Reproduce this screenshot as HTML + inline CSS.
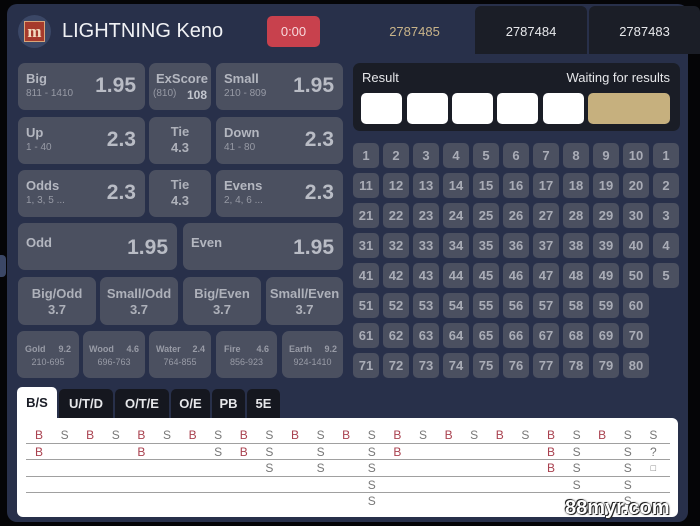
<!DOCTYPE html>
<html><head><meta charset="utf-8"><style>
*{margin:0;padding:0;box-sizing:border-box}
body{width:700px;height:526px;background:#050507;position:relative;overflow:hidden;font-family:"Liberation Sans","DejaVu Sans",sans-serif}
.a{position:absolute}
.panel{left:7px;top:4px;width:681px;height:518px;background:#28304a;border-radius:10px}
.cell{position:absolute;background:#4b5060;border-radius:7px;color:#aeb1ba;font-weight:bold}
.lbl{position:absolute;left:8px;top:8px;font-size:13px;color:#b4b7c0}
.sub{position:absolute;left:8px;top:25px;font-size:10px;font-weight:normal;color:#979aa5}
.big{position:absolute;right:9px;top:11px;font-size:21px;color:#b9bcc5}
.ctr{text-align:center;font-size:13px;line-height:16px;padding-top:7px}
.num{position:absolute;width:26px;height:25px;background:#4b5060;border-radius:5px;color:#a9acb6;font-size:13px;font-weight:bold;text-align:center;line-height:25px}
.tab{position:absolute;top:389px;height:29px;background:#15171f;color:#e6e7ea;font-size:13px;font-weight:bold;text-align:center;line-height:29px;border-radius:5px 5px 0 0}
.h{position:absolute;font-size:12px;width:14px;text-align:center;color:#777}
.B{color:#a9414f}
.ln{position:absolute;left:26px;width:644px;height:1px;background:#a0a0a0}
.el{position:absolute;top:331px;height:47px;background:#4b5060;border-radius:7px;font-size:9px;color:#989ba6;font-weight:bold}
</style></head><body>
<div class="a panel"></div>
<div class="a" style="left:355px;top:4px;width:119px;height:50px;background:#28304a;border-radius:8px 8px 0 0"></div>
<div class="a" style="left:475px;top:6px;width:112px;height:48px;background:#1b1e27;border-radius:6px 6px 0 0;color:#e8e9ec;font-size:13px;text-align:center;line-height:52px">2787484</div>
<div class="a" style="left:589px;top:6px;width:111px;height:48px;background:#1b1e27;border-radius:6px 6px 0 0;color:#e8e9ec;font-size:13px;text-align:center;line-height:52px">2787483</div>
<div class="a" style="left:355px;top:6px;width:119px;color:#c9b48a;font-size:13px;text-align:center;line-height:52px">2787485</div>
<div class="a" style="left:688px;top:54px;width:12px;height:472px;background:#050507"></div>

<div class="a" style="left:18px;top:15px;width:33px;height:33px;border-radius:50%;background:#3b4766"></div>
<div class="a" style="left:24px;top:21px;width:21px;height:21px;background:#a63a2c;border:1px solid #d9a57a;color:#f3dcc0;font-family:'Liberation Serif',serif;font-size:17px;font-weight:bold;text-align:center;line-height:19px">m</div>
<div class="a" style="left:62px;top:20px;color:#f0f1f4;font-size:20px">LIGHTNING Keno</div>
<div class="a" style="left:267px;top:16px;width:53px;height:31px;background:#c8414d;border-radius:5px;color:#f7d9dc;font-size:13px;text-align:center;line-height:31px">0:00</div>

<div class="cell" style="left:18px;top:63px;width:127px;height:47px"><div class="lbl">Big</div><div class="sub">811 - 1410</div><div class="big">1.95</div></div>
<div class="cell" style="left:149px;top:63px;width:62px;height:47px"><div class="lbl" style="left:7px">ExScore</div><div class="sub" style="left:4px;top:25px;font-size:10px">(810)</div><div class="a" style="right:4px;top:25px;font-size:12px;color:#c3c6ce">108</div></div>
<div class="cell" style="left:216px;top:63px;width:127px;height:47px"><div class="lbl">Small</div><div class="sub">210 - 809</div><div class="big">1.95</div></div>

<div class="cell" style="left:18px;top:117px;width:127px;height:47px"><div class="lbl">Up</div><div class="sub">1 - 40</div><div class="big">2.3</div></div>
<div class="cell ctr" style="left:149px;top:117px;width:62px;height:47px">Tie<br>4.3</div>
<div class="cell" style="left:216px;top:117px;width:127px;height:47px"><div class="lbl">Down</div><div class="sub">41 - 80</div><div class="big">2.3</div></div>

<div class="cell" style="left:18px;top:170px;width:127px;height:47px"><div class="lbl">Odds</div><div class="sub">1, 3, 5 ...</div><div class="big">2.3</div></div>
<div class="cell ctr" style="left:149px;top:170px;width:62px;height:47px">Tie<br>4.3</div>
<div class="cell" style="left:216px;top:170px;width:127px;height:47px"><div class="lbl">Evens</div><div class="sub">2, 4, 6 ...</div><div class="big">2.3</div></div>

<div class="cell" style="left:18px;top:223px;width:159px;height:47px"><div class="lbl" style="top:12px">Odd</div><div class="big" style="top:13px">1.95</div></div>
<div class="cell" style="left:183px;top:223px;width:160px;height:47px"><div class="lbl" style="top:12px">Even</div><div class="big" style="top:13px">1.95</div></div>

<div class="cell ctr" style="left:18px;top:277px;width:78px;height:48px;padding-top:9px">Big/Odd<br>3.7</div>
<div class="cell ctr" style="left:100px;top:277px;width:78px;height:48px;padding-top:9px">Small/Odd<br>3.7</div>
<div class="cell ctr" style="left:183px;top:277px;width:78px;height:48px;padding-top:9px">Big/Even<br>3.7</div>
<div class="cell ctr" style="left:266px;top:277px;width:77px;height:48px;padding-top:9px">Small/Even<br>3.7</div>

<div class="el" style="left:17px;width:62px"><div class="a" style="left:8px;top:13px">Gold</div><div class="a" style="right:8px;top:13px">9.2</div><div class="a" style="left:0;width:100%;text-align:center;top:26px;font-weight:normal">210-695</div></div>
<div class="el" style="left:83px;width:62px"><div class="a" style="left:6px;top:13px">Wood</div><div class="a" style="right:6px;top:13px">4.6</div><div class="a" style="left:0;width:100%;text-align:center;top:26px;font-weight:normal">696-763</div></div>
<div class="el" style="left:149px;width:62px"><div class="a" style="left:7px;top:13px">Water</div><div class="a" style="right:6px;top:13px">2.4</div><div class="a" style="left:0;width:100%;text-align:center;top:26px;font-weight:normal">764-855</div></div>
<div class="el" style="left:216px;width:61px"><div class="a" style="left:8px;top:13px">Fire</div><div class="a" style="right:8px;top:13px">4.6</div><div class="a" style="left:0;width:100%;text-align:center;top:26px;font-weight:normal">856-923</div></div>
<div class="el" style="left:282px;width:61px"><div class="a" style="left:7px;top:13px">Earth</div><div class="a" style="right:6px;top:13px">9.2</div><div class="a" style="left:0;width:100%;text-align:center;top:26px;font-weight:normal">924-1410</div></div>

<div class="a" style="left:353px;top:63px;width:327px;height:68px;background:#1a1d26;border-radius:7px"></div>
<div class="a" style="left:362px;top:70px;color:#e6e7ea;font-size:13px">Result</div>
<div class="a" style="right:30px;top:70px;color:#e6e7ea;font-size:13px">Waiting for results</div>
<div class="a" style="left:361px;top:93px;width:41px;height:31px;background:#fff;border-radius:5px"></div>
<div class="a" style="left:407px;top:93px;width:41px;height:31px;background:#fff;border-radius:5px"></div>
<div class="a" style="left:452px;top:93px;width:41px;height:31px;background:#fff;border-radius:5px"></div>
<div class="a" style="left:497px;top:93px;width:41px;height:31px;background:#fff;border-radius:5px"></div>
<div class="a" style="left:543px;top:93px;width:41px;height:31px;background:#fff;border-radius:5px"></div>
<div class="a" style="left:588px;top:93px;width:82px;height:31px;background:#c6b07e;border-radius:5px"></div>

<div id="nums"></div>

<div class="tab" style="left:17px;width:40px;background:#fff;color:#1a1d26;top:387px;height:31px;line-height:31px">B/S</div>
<div class="tab" style="left:59px;width:54px">U/T/D</div>
<div class="tab" style="left:115px;width:54px">O/T/E</div>
<div class="tab" style="left:171px;width:39px">O/E</div>
<div class="tab" style="left:212px;width:33px">PB</div>
<div class="tab" style="left:247px;width:33px">5E</div>
<div class="a" style="left:17px;top:418px;width:661px;height:99px;background:#fff;border-radius:0 6px 6px 6px"></div>
<div class="ln" style="top:443px"></div>
<div class="ln" style="top:459px"></div>
<div class="ln" style="top:476px"></div>
<div class="ln" style="top:492px"></div>
<div id="hist"></div>
<div class="a" style="left:565px;top:497px;font-size:20px;font-weight:bold;color:#fff;text-shadow:0 0 2px #000,1px 1px 0 #333,-1px -1px 0 #333">88myr.com</div>
<div class="a" style="left:0;top:255px;width:6px;height:22px;background:#3b4766;border-radius:0 4px 4px 0"></div>

<script>
var n=document.getElementById('nums'),s='';
for(var r=0;r<8;r++){for(var c=0;c<11;c++){var t;if(c<10)t=r*10+c+1;else if(r<5)t=r+1;else continue;
s+='<div class="num" style="left:'+(353+c*30)+'px;top:'+(143+r*30)+'px">'+t+'</div>';}}
n.innerHTML=s;
var d=["BB","S","B","S","BB","S","B","SS","BB","SSS","B","SSS","B","SSSSS","BB","S","B","S","B","S","BBB","SSSS","B","SSSSS","S?□"];
var h='';
for(var i=0;i<d.length;i++){for(var j=0;j<d[i].length;j++){var ch=d[i][j];
h+='<div class="h'+(ch=='B'?' B':'')+'" style="left:'+(32+i*25.6)+'px;top:'+(428+j*16.6)+'px'+(ch=='□'?';font-size:9px;margin-top:2px':'')+'">'+ch+'</div>';}}
document.getElementById('hist').innerHTML=h;
</script>
</body></html>
